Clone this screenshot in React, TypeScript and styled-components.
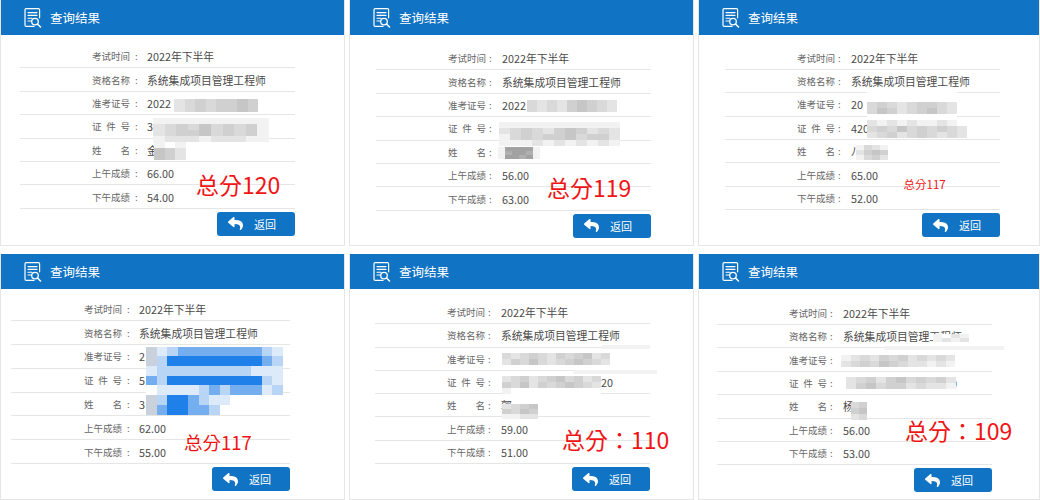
import React from "react";
import styled, { createGlobalStyle } from "styled-components";
import { FaReply } from "react-icons/fa";

const Global = createGlobalStyle`
  html, body { margin: 0; padding: 0; background: #fff; overflow: hidden; }
  body { font-family: "Noto Sans CJK SC", "Liberation Sans", sans-serif; }
`;

const Board = styled.div`
  width: 1040px;
  height: 500px;
  display: grid;
  grid-template-columns: 345px 345px 342px;
  grid-template-rows: 246px 246px;
  column-gap: 4px;
  row-gap: 8px;
`;

const Panel = styled.section`
  position: relative;
  overflow: hidden;
  box-sizing: border-box;
  background: #fff;
  border: 1px solid #e6e6e6;
  border-top: 0;
`;

const Header = styled.header`
  height: 35px;
  margin: 0 -1px;
  padding-left: 24px;
  display: flex;
  align-items: center;
  gap: 8px;
  background: #1073c3;
  color: #fff;
  font-size: 12.5px;
`;

const Body = styled.div<{ $left: number; $top: number; $width: number }>`
  margin-left: ${(p) => p.$left}px;
  padding-top: ${(p) => p.$top}px;
  width: ${(p) => p.$width}px;
`;

const Row = styled.div<{ $height: number; $inset: number; $wideColon: boolean }>`
  box-sizing: border-box;
  height: ${(p) => p.$height}px;
  padding-left: ${(p) => p.$inset}px;
  display: grid;
  grid-template-columns: ${(p) => (p.$wideColon ? 55 : 54)}px 1fr;
  align-items: center;
  border-bottom: 1px solid #e6e6e6;
`;

const Label = styled.span<{ $wideColon: boolean }>`
  display: flex;
  align-items: center;
  gap: ${(p) => (p.$wideColon ? 5 : 3)}px;
  color: #666;
  font-size: 9.5px;
  line-height: 14px;
`;

const LabelText = styled.span`
  width: 38px;
  text-align: justify;
  text-align-last: justify;
  white-space: pre-wrap;
`;

const Value = styled.span<{ $indent: number }>`
  padding-left: ${(p) => p.$indent}px;
  color: #4a4a4a;
  font-size: 10.8px;
  line-height: 14px;
  white-space: nowrap;
`;

const Footer = styled.div`
  margin-top: 3px;
  display: flex;
  justify-content: flex-end;
`;

const BackButton = styled.button`
  box-sizing: border-box;
  width: 78px;
  height: 24px;
  padding: 0 0 0 11px;
  display: flex;
  align-items: center;
  gap: 11px;
  border: 0;
  border-radius: 3px;
  background: #1073c3;
  color: #fff;
  font-family: inherit;
  font-size: 11px;
`;

const Score = styled.div<{ $x: number; $center: number; $size: number }>`
  position: absolute;
  left: ${(p) => p.$x}px;
  top: ${(p) => p.$center - p.$size * 0.61}px;
  color: #f01414;
  font-family: "Noto Sans CJK TC", "Noto Sans CJK SC", sans-serif;
  font-size: ${(p) => p.$size}px;
  line-height: ${(p) => p.$size}px;
  white-space: nowrap;
`;

const Patch = styled.div<{ $x: number; $y: number }>`
  position: absolute;
  left: ${(p) => p.$x}px;
  top: ${(p) => p.$y}px;
  display: flex;
  flex-direction: column;
  filter: blur(0.7px);
`;

const PatchRow = styled.div`
  display: flex;
`;

const Tile = styled.i<{ $w: number; $h: number; $c: string }>`
  display: block;
  width: ${(p) => p.$w}px;
  height: ${(p) => p.$h}px;
  background: ${(p) => p.$c};
`;

const tones: Record<string, string> = {
  ".": "transparent",
  w: "#ffffff",
  a: "#c6c6c6",
  b: "#d0d0d0",
  c: "#d9d9d9",
  d: "#e4e4e4",
  e: "#f2f2f2",
  f: "#b0b0b0",
  g: "#a2a2a2",
  B: "#1f80ea",
  M: "#74aeef",
  L: "#b8d5f5",
  K: "#dceaf9",
  G: "#c9d1dc",
};

const DocIcon = () => (
  <svg width="18" height="20" viewBox="0 0 18 20" fill="none" stroke="#fff" strokeLinecap="round">
    <path d="M10 18.4H2.2a1.2 1.2 0 0 1-1.2-1.2V1.8A1.2 1.2 0 0 1 2.2.6h12.2a1.2 1.2 0 0 1 1.2 1.2v8" strokeWidth="1.2" />
    <path d="M4 4.6h9M4 7.4h9M4 10.2h4M4 13h3" strokeWidth="1.1" />
    <circle cx="11" cy="13.6" r="3.3" strokeWidth="1.3" />
    <path d="M13.5 16l3 3" strokeWidth="1.5" />
  </svg>
);

type PatchSpec = { x: number; y: number; w: number; h: number; rows: string[] };
type Card = {
  left: number;
  top: number;
  width: number;
  height: number;
  inset: number;
  wideColon?: boolean;
  scores: [string, string];
  score: { text: string; x: number; center: number; size: number };
  masked: { v: string; indent?: number }[];
  patches: PatchSpec[];
};

const cards: Card[] = [
  {
    left: 19, top: 10, width: 275, height: 23.4, inset: 72, wideColon: true,
    scores: ["66.00", "54.00"],
    score: { text: "总分120", x: 195, center: 187, size: 23 },
    masked: [{ v: "2022" }, { v: "3" }, { v: "金" }],
    patches: [
      { x: 173, y: 99, w: 10.5, h: 13, rows: ["dcbcbbab"] },
      { x: 152, y: 118, w: 11.6, h: 6, rows: ["eeeeeeeeee", "dcbcacbcbe", "dcbbacbcbe", "edddedddee"] },
      { x: 153, y: 142, w: 10.5, h: 6, rows: ["ewe", "abd", "abd"] },
    ],
  },
  {
    left: 26, top: 12, width: 275, height: 23.4, inset: 72,
    scores: ["56.00", "63.00"],
    score: { text: "总分119", x: 197, center: 190, size: 23 },
    masked: [{ v: "2022" }, { v: "" }, { v: "" }],
    patches: [
      { x: 177, y: 100, w: 10, h: 12, rows: ["cdcdbabcd"] },
      { x: 149, y: 122, w: 11, h: 6, rows: ["eeeeeeeeeee", "dcbcdbabdcd", "ecbcbbacbbd", "eeedededede"] },
      { x: 148, y: 147, w: 7, h: 4, rows: ["egggge", "efggfe", "eggfge"] },
    ],
  },
  {
    left: 26, top: 11.5, width: 275, height: 23.4, inset: 72,
    scores: ["65.00", "52.00"],
    score: { text: "总分117", x: 204.5, center: 186, size: 11.5 },
    masked: [{ v: "20" }, { v: "420" }, { v: "八" }],
    patches: [
      { x: 168, y: 90, w: 10, h: 6, rows: ["wwwwwwwww", "wwwwwwwww", "cbcdcbbcd", "cabdcbacd", "wwwwwwwww", "dededeede", "cbcacbcbcd", "dcbdcbcdcd"] },
      { x: 157, y: 145, w: 8, h: 5, rows: ["ecde", "dbab", "ecbd"] },
    ],
  },
  {
    left: 10, top: 8.5, width: 279, height: 23.8, inset: 73, wideColon: true,
    scores: ["62.00", "55.00"],
    score: { text: "总分117", x: 183, center: 190, size: 18.5 },
    masked: [{ v: "2" }, { v: "5" }, { v: "3" }],
    patches: [
      {
        x: 145, y: 92.7, w: 10.5, h: 9.7,
        rows: ["GKLMMMMMMMMLK", "GLBBBBBBBBBML", "KLLLLLLLLLKKK", "MLBBBBBBBBBLK", "wKKKKLMLMMMKL", "GLBBMLKKw", "GMBBMMLw"],
      },
    ],
  },
  {
    left: 25, top: 12, width: 275, height: 23.3, inset: 72,
    scores: ["59.00", "51.00"],
    score: { text: "总分：110", x: 212, center: 188, size: 23 },
    masked: [{ v: "" }, { v: "920", indent: 94 }, { v: "郭" }],
    patches: [
      { x: 252, y: 91, w: 12, h: 4, rows: ["eeee"] },
      { x: 223, y: 116, w: 12, h: 4, rows: ["eeeeeee"] },
      { x: 152, y: 99, w: 9, h: 6, rows: ["cdcbcdbcbadc", "dbcacdcbabcd"] },
      { x: 152, y: 122, w: 9, h: 6, rows: ["dcbdcbacbdc", "bcadbcbabcd", "ewwwwwwwwww"] },
      { x: 152, y: 150, w: 9, h: 5, rows: ["dcba", "bcab", "eedd"] },
    ],
  },
  {
    left: 18, top: 12.6, width: 275, height: 23.4, inset: 72,
    scores: ["56.00", "53.00"],
    score: { text: "总分：109", x: 206, center: 179, size: 23 },
    masked: [{ v: "2" }, { v: "0010", indent: 90 }, { v: "杨" }],
    patches: [
      { x: 234, y: 80, w: 9, h: 4, rows: ["ewde", "eded"] },
      { x: 185, y: 92, w: 10, h: 4, rows: ["eeeeeeeeeeee"] },
      { x: 142, y: 101, w: 9.5, h: 6, rows: ["edcdbcbdcdcd", "dcbcabcddede"] },
      { x: 147, y: 122.7, w: 10, h: 6, rows: ["dcbdbacbcbd", "dbacbbdcdde"] },
      { x: 152, y: 148, w: 8, h: 6, rows: ["cb", "ba", "dc"] },
    ],
  },
];

const ExamRows = ({ card }: { card: Card }) => {
  const items: [string, string, number][] = [
    ["考试时间", "2022年下半年", 0],
    ["资格名称", "系统集成项目管理工程师", 0],
    ["准考证号", card.masked[0].v, card.masked[0].indent ?? 0],
    ["证 件 号", card.masked[1].v, card.masked[1].indent ?? 0],
    ["姓 名", card.masked[2].v, card.masked[2].indent ?? 0],
    ["上午成绩", card.scores[0], 0],
    ["下午成绩", card.scores[1], 0],
  ];
  return (
    <>
      {items.map(([label, value, indent]) => (
        <Row key={label} $height={card.height} $inset={card.inset} $wideColon={!!card.wideColon}>
          <Label $wideColon={!!card.wideColon}>
            <LabelText>{label}</LabelText>
            <span>:</span>
          </Label>
          <Value $indent={indent}>{value}</Value>
        </Row>
      ))}
    </>
  );
};

export default function App() {
  return (
    <>
      <Global />
      <Board>
        {cards.map((card, i) => (
          <Panel key={i}>
            <Header>
              <DocIcon />
              <span>查询结果</span>
            </Header>
            <Body $left={card.left} $top={card.top} $width={card.width}>
              <ExamRows card={card} />
              <Footer>
                <BackButton>
                  <FaReply size={15} />
                  <span>返回</span>
                </BackButton>
              </Footer>
            </Body>
            {card.patches.map((patch, j) => (
              <Patch key={j} $x={patch.x} $y={patch.y}>
                {patch.rows.map((row, k) => (
                  <PatchRow key={k}>
                    {row.split("").map((t, m) => (
                      <Tile key={m} $w={patch.w} $h={patch.h} $c={tones[t]} />
                    ))}
                  </PatchRow>
                ))}
              </Patch>
            ))}
            <Score $x={card.score.x} $center={card.score.center} $size={card.score.size}>
              {card.score.text}
            </Score>
          </Panel>
        ))}
      </Board>
    </>
  );
}
